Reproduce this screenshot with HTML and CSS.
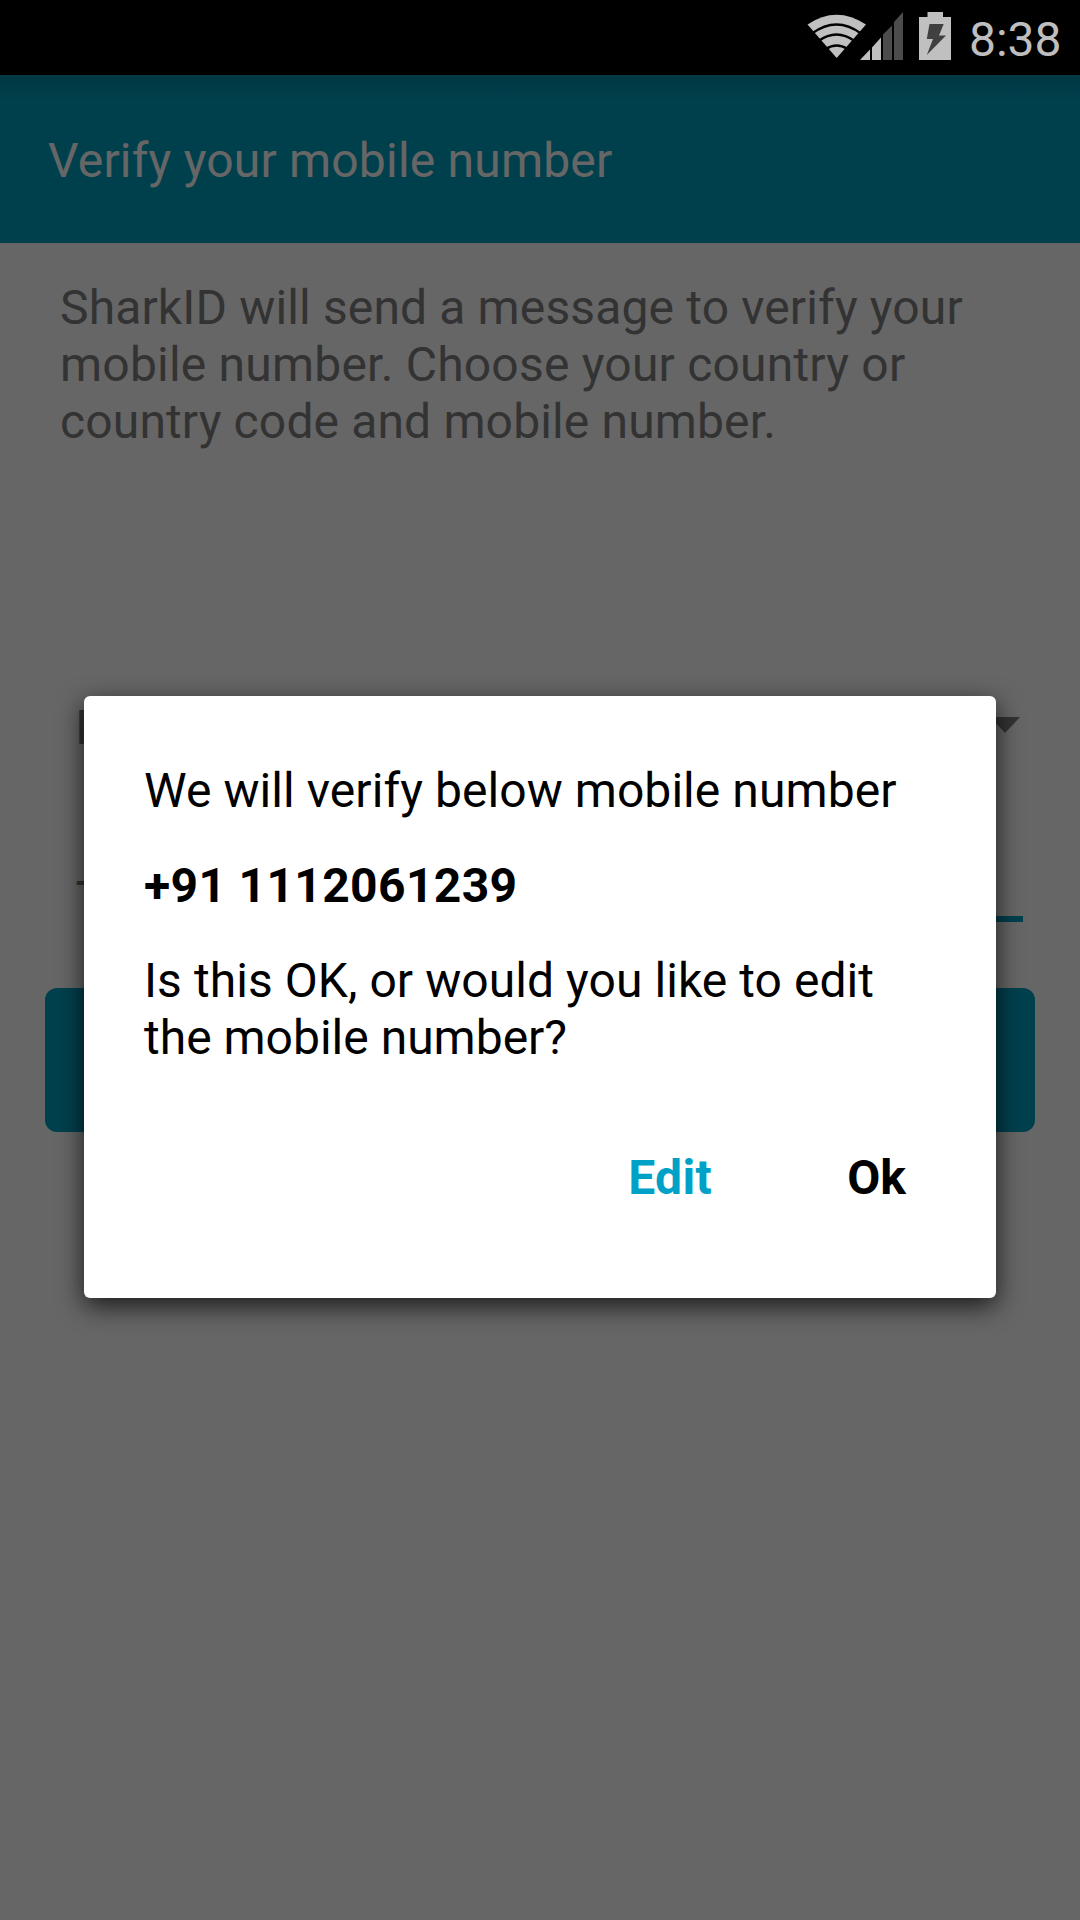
FILE: index.html
```html
<!DOCTYPE html>
<html lang="en">
<head>
<meta charset="utf-8">
<title>Verify your mobile number</title>
<link rel="stylesheet" href="styles.css">
</head>
<body>
<div class="screen">
  <div class="status-bar">
    <svg class="status-icons" width="150" height="75" viewBox="0 0 150 75">
      <path class="lit" d="M0.500 24.500Q29.500 5 59 24.500L29.700 58Z"/>
      <g class="gaps">
        <path d="M5 33.500Q29.500 15.500 54 33.500"/>
        <path d="M11.500 41Q29.500 28 47.500 41"/>
        <path d="M19 49Q29.500 42 40.500 49"/>
      </g>
      <path class="lit" d="M53 60L63 49.500V60ZM65 47.500L74 37.500V60H65Z"/>
      <path class="unlit" d="M76 34.500L85 25.500V60H76ZM87 22L96 12V60H87Z"/>
      <path class="lit" d="M112 17H120.500V12H136V17H144V60H112Z"/>
      <path class="bolt" d="M122.500 24H136.700L132 35.500H139L119.800 55L126 39H119.800Z"/>
    </svg>
    <span class="clock">8:38</span>
  </div>

  <div class="page">
    <header class="app-bar"><h1 class="title">Verify your mobile number</h1></header>
    <main class="form">
      <p class="intro">SharkID will send a message to verify your<br><span class="wide">mobile number. Choose your country or</span><br>country code and mobile number.</p>
      <div class="country"><span>I</span><i class="caret"></i></div>
      <div class="phone"><span class="code">+</span><span class="number"></span></div>
      <div class="submit"></div>
    </main>
    <div class="scrim">
      <section class="dialog">
        <p class="line lead">We will verify below mobile number</p>
        <p class="line strong">+91 1112061239</p>
        <p class="line ask">Is this OK, or would you like to edit</p>
        <p class="line">the mobile number?</p>
        <div class="actions"><span class="edit">Edit</span><span class="ok">Ok</span></div>
      </section>
    </div>
  </div>
</div>
</body>
</html>
```
FILE: styles.css
```css
* { box-sizing: border-box; }
body, h1, p { margin: 0; }
body { font: 400 48px/57px Roboto, sans-serif; }
.screen {
  width: 1080px;
  height: 1920px;
  display: flex;
  flex-direction: column;
  overflow: hidden;
}
.status-bar {
  height: 75px;
  flex: none;
  display: flex;
  padding-left: 807px;
  gap: 12px;
  background: #000;
  color: #bebebe;
}
.status-icons { flex: none; }
.clock { padding-top: 11px; white-space: nowrap; }
.lit { fill: #c0c0c0; }
.unlit { fill: #4c4c4c; }
.bolt { fill: #404040; }
.gaps path { fill: none; stroke: #000; stroke-width: 2.4; }

.page { position: relative; flex: 1; background: #fff; }
.app-bar {
  height: 168px;
  padding: 57px 0 0 48px;
  background: linear-gradient(#008ca8, #00a1c1 30px);
  color: #fff;
}
.title { font: inherit; letter-spacing: .2px; white-space: nowrap; }
.form { padding: 36px 45px 0; color: #808080; }
.intro { padding-left: 15px; letter-spacing: .14px; white-space: nowrap; }
.wide { letter-spacing: .21px; }
.country {
  height: 57px;
  margin: 249px 15px 0 30px;
  display: flex;
  align-items: flex-start;
  justify-content: space-between;
  color: #808080;
}
.caret {
  margin-top: 18px;
  border: 15px solid transparent;
  border-top: 16px solid #808080;
  border-bottom: 0;
}
.phone {
  height: 68px;
  margin: 98px 12px 0 30px;
  display: flex;
  gap: 60px;
  color: #808080;
}
.number { flex: 1; border-bottom: 6px solid #00a1c1; }
.submit { height: 144px; margin-top: 66px; border-radius: 12px; background: #00a1c1; }

.scrim {
  position: absolute;
  inset: 0;
  padding: 621px 84px 0;
  background: rgba(0, 0, 0, .6);
}
.dialog {
  height: 602px;
  padding: 66px 60px 0;
  border-radius: 6px;
  background: #fff;
  color: #000;
  box-shadow: 0 8px 26px rgba(0, 0, 0, .75);
}
.line { white-space: nowrap; }
.lead { letter-spacing: .07px; }
.strong { margin: 38px 0; font-weight: 700; letter-spacing: .35px; }
.ask { letter-spacing: .06px; }
.actions {
  margin-top: 83px;
  padding-right: 30px;
  display: flex;
  justify-content: flex-end;
  gap: 135px;
  font-weight: 700;
}
.edit { color: #00a1c6; letter-spacing: .4px; }
```
